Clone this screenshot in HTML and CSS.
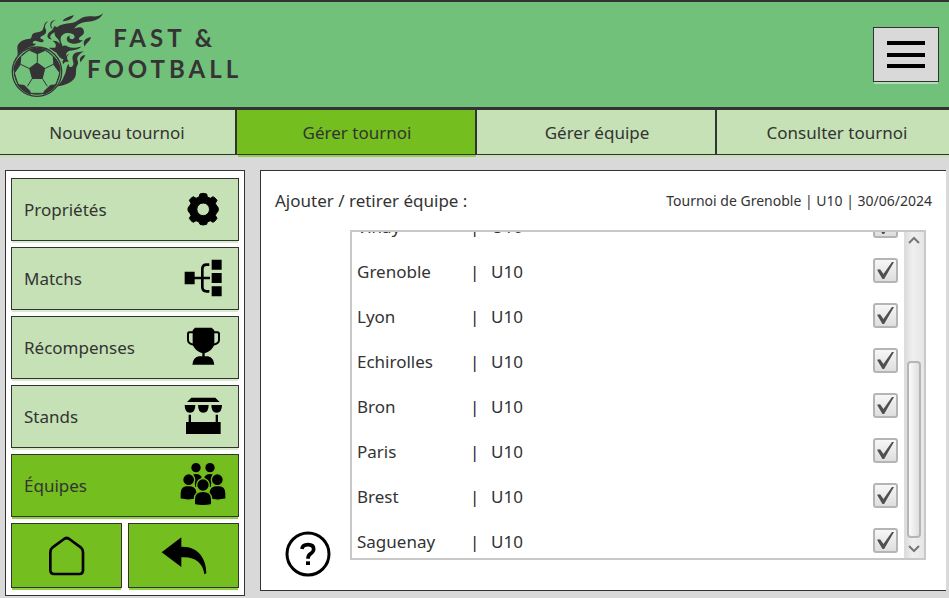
FILE: index.html
```html
<!DOCTYPE html>
<html lang="fr">
<head>
<meta charset="utf-8">
<title>Fast &amp; Football</title>
<link rel="stylesheet" href="styles.css">
</head>
<body>
<header class="header">
  <div class="brand">
    <svg class="brand-mark" viewBox="30 30 285 264" aria-hidden="true">
      <g class="flame">
        <path d="M309 36C300 46 288 47 275 46C252 43 240 54 227 62C212 70 190 64 175 76C166 82 162 91 164 100C166 110 174 112 178 121C181 130 174 137 166 140L180 158L188 142C190 132 180 126 182 112C184 98 202 92 218 99C228 104 224 117 213 114C208 113 207 107 210 104C199 104 197 117 206 124C220 133 242 127 249 117C237 120 233 112 241 107C250 102 256 95 249 83C240 75 230 80 222 83C233 67 248 63 263 62C285 61 303 53 309 36Z"/>
        <path d="M222 42C217 53 209 59 188 61C191 51 205 48 222 42Z"/>
        <path d="M168 57C153 63 151 73 158 83C152 83 149 72 152 65C155 60 160 57 168 57Z"/>
        <path d="M145 61C130 64 134 76 128 86C120 97 106 91 98 99C94 104 96 110 91 113C75 113 54 121 52 138C51 147 55 155 52 166C61 154 70 149 78 143C90 135 103 137 108 128C101 129 96 126 99 122C108 115 115 125 126 124C134 122 132 115 124 114C119 112 120 107 126 105C139 101 141 91 136 82C133 73 138 67 145 61Z"/>
        <path d="M162 76C177 76 174 89 160 96C148 102 148 112 158 115C146 116 139 108 144 99C148 91 160 89 162 76Z"/>
        <path d="M273 108C256 111 246 121 254 137C258 125 269 124 273 108Z"/>
        <path d="M158 120C172 117 182 127 181 142C187 132 197 132 204 137C218 144 231 138 244 137C232 150 216 145 205 151C193 158 203 168 193 173C184 178 176 165 169 155L146 140L166 140C170 133 167 125 158 120Z"/>
        <path d="M252 150C240 154 222 151 218 166C215 180 225 186 218 195C213 202 204 197 207 188C197 195 201 210 192 225C188 237 179 249 172 256C192 253 210 248 222 234C233 220 224 207 232 193C239 181 228 178 233 167C237 159 246 156 252 150Z"/>
        <path d="M256 162C243 164 236 172 242 184C246 175 252 173 256 162Z"/>
        <path d="M209 158C199 163 199 174 207 181C202 185 195 179 190 190C185 184 189 174 196 169C197 164 201 160 209 158Z"/>
      </g>
      <circle class="ball" cx="111" cy="212" r="74"/>
      <circle class="ball-inner" cx="111" cy="212" r="68"/>
      <g class="patch">
        <path d="M111 184L136 202L128 234H96L87 202Z"/>
        <path d="M88 144Q112 136 136 144L133 151L112 160L92 151Z"/>
        <path d="M40 203Q44 179 64 164L62 191L43 218Z"/>
        <path d="M182 203Q178 178 158 164L160 191L180 218Z"/>
        <path d="M50 249L73 252L91 270L93 282Q67 274 50 249Z"/>
        <path d="M172 249L151 252L132 270L129 282Q156 274 172 249Z"/>
      </g>
      <path class="seam" d="M112 158V184M62 190L87 202M136 202L160 190M96 234L82 256M128 234L142 256M91 277H132M88 145L65 165M136 145L158 165M43 216L54 250M180 216L168 250"/>
    </svg>
    <div class="brand-name"><span>FAST &amp;</span><span>FOOTBALL</span></div>
  </div>
  <button class="menu" aria-label="Menu">
    <svg class="menu-icon" viewBox="0 0 38 28" aria-hidden="true"><path d="M0 2H38M0 14H38M0 25H38"/></svg>
  </button>
</header>

<nav class="tabs">
  <button class="tab">Nouveau tournoi</button>
  <button class="tab active">Gérer tournoi</button>
  <button class="tab">Gérer équipe</button>
  <button class="tab">Consulter tournoi</button>
</nav>

<main class="main">
  <aside class="sidebar">
    <button class="side">Propriétés
      <svg class="icon" viewBox="0 0 138 138" aria-hidden="true"><path class="gear" fill-rule="evenodd" d="M60 24Q69 20 80 24L82 33L91 37L99 32Q107 36 111 43L106 52L110 60L113 62Q118 70 113 78L110 80L106 88L111 97Q107 105 99 109L91 104L82 108L80 115Q69 119 60 115L57 108L48 104L40 109Q32 105 28 97L33 88L29 80L26 78Q21 70 26 62L29 60L33 52L28 43Q32 36 40 32L48 37L57 33ZM69.500 51A19 19 0 1 0 69.500 89A19 19 0 1 0 69.500 51Z"/></svg>
    </button>
    <button class="side">Matchs
      <svg class="icon" viewBox="0 0 138 138" aria-hidden="true"><path d="M14 50H44V88H14ZM95 14H125V44H95ZM95 54H125V84H95ZM95 94H125V124H95Z"/><path class="line" d="M40 69H90M88 29H80Q67 29 67 42V96Q67 109 80 109H88"/></svg>
    </button>
    <button class="side">Récompenses
      <svg class="icon" viewBox="0 0 138 138" aria-hidden="true"><path d="M45 11H95L103 19V61Q98 80 74 88V97H84Q101 101 103 122H37Q39 101 56 97H67V88Q43 80 38 61V19Z"/><path class="line thin" d="M42 25H28Q24 25 24 30V48Q24 60 42 62M98 25H112Q117 25 117 30V48Q117 60 98 62"/></svg>
    </button>
    <button class="side">Stands
      <svg class="icon" viewBox="0 0 138 138" aria-hidden="true"><path d="M34 14H106L119 27H21ZM14 36H46Q46 59 30 59Q14 59 14 36ZM54 36H86Q86 59 70 59Q54 59 54 36ZM94 36H126Q126 59 110 59Q94 59 94 36ZM26 65H33V87H107V65H114V87H122V123H18V87H26Z"/></svg>
    </button>
    <button class="side active">Équipes
      <svg class="icon" viewBox="0 0 138 138" aria-hidden="true"><g class="people"><path d="M38 36Q54 30 66 42V76H44ZM100 36Q84 30 72 42V76H94Z"/><circle cx="48" cy="17" r="16"/><circle cx="90" cy="17" r="16"/><path d="M0 111V94Q0 70 25 70Q50 70 52 94V111Q24 118 0 111ZM138 111V94Q138 70 113 70Q88 70 86 94V111Q114 118 138 111Z"/><circle cx="26" cy="53" r="18"/><circle cx="112" cy="53" r="18"/><path d="M43 128V112Q43 88 69 88Q95 88 95 112V128Q69 134 43 128Z"/><circle cx="69" cy="69" r="19"/></g></svg>
    </button>
    <div class="side-actions">
      <button class="action" aria-label="Accueil">
        <svg class="icon" viewBox="0 0 138 138" aria-hidden="true"><path class="line" d="M59 19Q68 11 77 19L110 43Q117 49 117 58V112Q117 123 107 123H30Q19 123 19 112V58Q19 49 26 43Z"/></svg>
      </button>
      <button class="action" aria-label="Retour">
        <svg class="icon" viewBox="0 0 138 138" aria-hidden="true"><path d="M2 58L61 13V41C112 39 136 77 136 121L130 124C126 88 99 69 61 73V102Z"/></svg>
      </button>
    </div>
  </aside>

  <section class="content">
    <div class="content-head">
      <h1 class="title">Ajouter / retirer équipe :</h1>
      <p class="context">Tournoi de Grenoble | U10 | 30/06/2024</p>
    </div>
    <div class="content-body">
      <button class="help" aria-label="Aide">
        <svg class="icon" viewBox="0 0 138 138" aria-hidden="true"><circle class="ring" cx="69" cy="69" r="63"/><path class="question" d="M51 54Q52 41 69 41Q86 41 86 54Q86 62 77 68Q69 73 69 83"/><path d="M63 91H75V102H63Z"/></svg>
      </button>
      <div class="list-box">
        <ul class="teams">
          <li class="team"><label class="name" for="t1">Vinay</label><span class="bar">|</span><span class="category">U10</span><input class="check" type="checkbox" id="t1" checked></li>
          <li class="team"><label class="name" for="t2">Grenoble</label><span class="bar">|</span><span class="category">U10</span><input class="check" type="checkbox" id="t2" checked></li>
          <li class="team"><label class="name" for="t3">Lyon</label><span class="bar">|</span><span class="category">U10</span><input class="check" type="checkbox" id="t3" checked></li>
          <li class="team"><label class="name" for="t4">Echirolles</label><span class="bar">|</span><span class="category">U10</span><input class="check" type="checkbox" id="t4" checked></li>
          <li class="team"><label class="name" for="t5">Bron</label><span class="bar">|</span><span class="category">U10</span><input class="check" type="checkbox" id="t5" checked></li>
          <li class="team"><label class="name" for="t6">Paris</label><span class="bar">|</span><span class="category">U10</span><input class="check" type="checkbox" id="t6" checked></li>
          <li class="team"><label class="name" for="t7">Brest</label><span class="bar">|</span><span class="category">U10</span><input class="check" type="checkbox" id="t7" checked></li>
          <li class="team"><label class="name" for="t8">Saguenay</label><span class="bar">|</span><span class="category">U10</span><input class="check" type="checkbox" id="t8" checked></li>
        </ul>
        <div class="scrollbar" aria-hidden="true">
          <svg class="arrow" viewBox="0 0 12 8"><path d="M1 7L6 2L11 7"/></svg>
          <div class="track"><div class="thumb"></div></div>
          <svg class="arrow" viewBox="0 0 12 8"><path d="M1 1L6 6L11 1"/></svg>
        </div>
      </div>
    </div>
  </section>
</main>
</body>
</html>
```
FILE: styles.css
```css
* {
  box-sizing: border-box;
}

body {
  margin: 0;
  min-height: 100vh;
  display: flex;
  flex-direction: column;
  overflow: hidden;
  background: #d9d9d9;
  color: #333;
  font-family: "Noto Sans", "Open Sans", sans-serif;
  font-size: 17px;
}

button {
  margin: 0;
  border: 1px solid #333;
  border-radius: 0;
  color: inherit;
  font: inherit;
  cursor: pointer;
}

svg {
  display: block;
}

.header {
  display: flex;
  align-items: center;
  justify-content: space-between;
  height: 109px;
  padding: 0 10px;
  border-top: 2px solid #333;
  border-bottom: 2px solid #333;
  background: #72c17a;
}

.brand {
  display: flex;
  align-items: center;
}

.brand-mark {
  width: 95px;
  height: 88px;
}

.flame,
.patch {
  fill: #353335;
}

.ball {
  fill: #72c17a;
  stroke: #353335;
  stroke-width: 4;
}

.ball-inner,
.seam {
  fill: none;
  stroke: #353335;
  stroke-width: 3;
}

.brand-name {
  display: flex;
  flex-direction: column;
  align-items: center;
  margin-left: -18px;
  padding-bottom: 4px;
  color: #353335;
  font: bold 24px/31px Lato, sans-serif;
  letter-spacing: 4px;
}

.menu {
  display: grid;
  place-items: center;
  width: 66px;
  height: 55px;
  padding: 0;
  background: #d9d9d9;
  box-shadow: 0 3px 0 -1px #b5dcb8;
}

.menu-icon {
  width: 38px;
  height: 28px;
  stroke: #000;
  stroke-width: 4;
}

.tabs {
  display: grid;
  grid-template-columns: repeat(4, 1fr);
  margin: 0 -8px 0 -3px;
}

.tab {
  height: 46px;
  padding: 0 0 0 2px;
  border-width: 1px 2px 1px 0;
  background: #c5e1b5;
  box-shadow: 0 3px 0 -1px #c5e1b5;
}

.active.active {
  background: #74be1f;
  box-shadow: 0 3px 0 -1px #8fd043;
}

.main {
  flex: 1;
  display: grid;
  grid-template-columns: 240px 1fr;
  column-gap: 15px;
  align-items: start;
  padding: 15px 3px 2px 5px;
}

.sidebar {
  display: flex;
  flex-direction: column;
  gap: 6px;
  padding: 7px 5px;
  border: 1px solid #333;
  background: #fff;
}

.side {
  display: flex;
  align-items: center;
  justify-content: space-between;
  height: 63px;
  padding: 0 12px 1px;
  background: #c5e1b5;
  box-shadow: 0 3px 0 -1px #d9ebcf;
}

.icon {
  width: 46px;
  height: 46px;
}

.line {
  fill: none;
  stroke: #000;
  stroke-width: 8;
}

.thin {
  stroke-width: 6;
}

.gear {
  stroke: #000;
  stroke-width: 3;
  stroke-linejoin: round;
}

.people {
  stroke: #74be1f;
  stroke-width: 4;
}

.side-actions {
  display: grid;
  grid-template-columns: 1fr 1fr;
  gap: 6px;
}

.action {
  display: grid;
  place-items: center;
  height: 65px;
  padding: 0;
  background: #74be1f;
  box-shadow: 0 3px 0 -1px #8fd043;
}

.content {
  display: flex;
  flex-direction: column;
  padding: 15px 14px 30px;
  border: 1px solid #333;
  border-right: 0;
  background: #fff;
}

.content-head {
  display: flex;
  align-items: center;
  justify-content: space-between;
  height: 29px;
}

.title {
  margin: 0;
  font-size: 17px;
  font-weight: normal;
}

.context {
  margin: 0;
  font-size: 14px;
}

.content-body {
  display: flex;
  align-items: flex-end;
  padding: 15px 6px 0 10px;
}

.help {
  flex: none;
  margin: 0 19px -17px 0;
  padding: 0;
  border: 0;
  background: none;
}

.ring {
  fill: none;
  stroke: #000;
  stroke-width: 9;
}

.question {
  fill: none;
  stroke: #000;
  stroke-width: 11;
}

.list-box {
  flex: 1;
  display: flex;
  height: 330px;
  overflow: hidden;
  border: 2px solid #c8c8c8;
}

.teams {
  flex: 1;
  margin: -29px 0 0;
  padding: 0 6px 0 5px;
  list-style: none;
}

.team {
  display: grid;
  grid-template-columns: 113px 21px 1fr 25px;
  align-items: center;
  height: 45px;
}

.name,
.bar,
.category {
  padding-top: 2px;
}

.bar {
  color: #223;
}

.check {
  appearance: none;
  width: 25px;
  height: 25px;
  margin: 0;
  border: 2px solid #b5b5b5;
  border-radius: 3px;
  background: linear-gradient(#f7f7f7, #dedede);
}

.check:checked::before {
  content: "";
  display: block;
  width: 17px;
  height: 17px;
  margin: 2px;
  background: #505050;
  clip-path: polygon(0 45%, 18% 42%, 38% 70%, 88% 0, 100% 0, 42% 100%, 32% 100%);
}

.scrollbar {
  display: flex;
  flex-direction: column;
  align-items: center;
  width: 20px;
  padding: 4px 3px 5px 1px;
  border-left: 1px solid #ddd;
  background: linear-gradient(90deg, #dcdcdc, #efefef 40%, #e6e6e6);
}

.arrow {
  width: 12px;
  height: 8px;
  fill: none;
  stroke: #777;
  stroke-width: 2;
}

.track {
  flex: 1;
  display: flex;
  align-items: flex-end;
  padding-bottom: 7px;
}

.thumb {
  width: 14px;
  height: 177px;
  border: 2px solid #b5b5b5;
  border-radius: 4px;
  background: linear-gradient(90deg, #fafafa, #dfdfdf);
}
```
